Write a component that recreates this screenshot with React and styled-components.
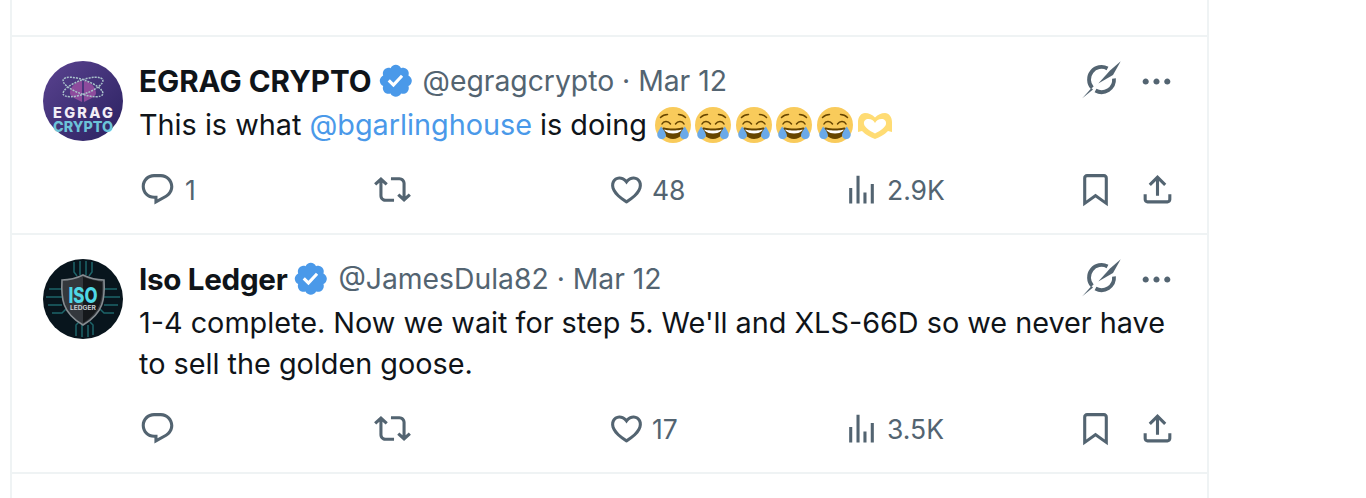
import React from 'react';
import styled, { createGlobalStyle } from 'styled-components';

const GlobalStyle = createGlobalStyle`
  html, body {
    margin: 0;
    padding: 0;
    height: 498px;
    overflow: hidden;
    background: #fff;
    font-family: Inter, "Liberation Sans", sans-serif;
    color: #0f1419;
  }
`;

const ICONS = {
  reply: 'M1.751 10c0-4.42 3.584-8 8.005-8h4.366c4.49 0 8.129 3.64 8.129 8.13 0 2.96-1.607 5.68-4.196 7.11l-8.054 4.46v-3.69h-.067c-4.49.1-8.183-3.51-8.183-8.01zm8.005-6c-3.317 0-6.005 2.69-6.005 6 0 3.37 2.77 6.08 6.138 6.01l.351-.01h1.761v2.3l5.087-2.81c1.951-1.08 3.163-3.13 3.163-5.36 0-3.39-2.744-6.13-6.129-6.13H9.756z',
  retweet: 'M4.5 3.88l4.432 4.14-1.364 1.46L5.5 7.55V16c0 1.1.896 2 2 2H13v2H7.5c-2.209 0-4-1.79-4-4V7.55L1.432 9.48.068 8.02 4.5 3.88zM16.5 6H11V4h5.5c2.209 0 4 1.79 4 4v8.45l2.068-1.93 1.364 1.46-4.432 4.14-4.432-4.14 1.364-1.46 2.068 1.93V8c0-1.1-.896-2-2-2z',
  like: 'M16.697 5.5c-1.222-.06-2.679.51-3.89 2.16l-.805 1.09-.806-1.09C9.984 6.01 8.526 5.44 7.304 5.5c-1.243.07-2.349.78-2.91 1.91-.552 1.12-.633 2.78.479 4.82 1.074 1.97 3.257 4.27 7.129 6.61 3.87-2.34 6.052-4.64 7.126-6.61 1.111-2.04 1.03-3.7.477-4.82-.561-1.13-1.666-1.84-2.908-1.91zm4.187 7.69c-1.351 2.48-4.001 5.12-8.379 7.67l-.503.3-.504-.3c-4.379-2.55-7.029-5.19-8.382-7.67-1.36-2.5-1.41-4.86-.514-6.67.887-1.79 2.647-2.91 4.601-3.01 1.651-.09 3.368.56 4.798 2.01 1.429-1.45 3.146-2.1 4.796-2.01 1.954.1 3.714 1.22 4.601 3.01.896 1.81.846 4.17-.514 6.67z',
  views: 'M8.75 21V3h2v18h-2zM18 21V8.5h2V21h-2zM4 21l.004-10h2L6 21H4zm9.248 0v-7h2v7h-2z',
  bookmark: 'M4 4.5C4 3.12 5.119 2 6.5 2h11C18.881 2 20 3.12 20 4.5v18.44l-8-5.71-8 5.71V4.5zM6.5 4c-.276 0-.5.22-.5.5v14.56l6-4.29 6 4.29V4.5c0-.28-.224-.5-.5-.5h-11z',
  share: 'M12 2.59l5.7 5.7-1.41 1.42L13 6.41V16h-2V6.41l-3.3 3.3-1.41-1.42L12 2.59zM21 15l-.02 3.51c0 1.38-1.12 2.49-2.5 2.49H5.5C4.11 21 3 19.88 3 18.5V15h2v3.5c0 .28.22.5.5.5h12.98c.28 0 .5-.22.5-.5L19 15h2z',
  more: 'M3 12c0-1.1.9-2 2-2s2 .9 2 2-.9 2-2 2-2-.9-2-2zm9 2c1.1 0 2-.9 2-2s-.9-2-2-2-2 .9-2 2 .9 2 2 2zm7 0c1.1 0 2-.9 2-2s-.9-2-2-2-2 .9-2 2 .9 2 2 2z',
  badge: 'M20.396 11c-.018-.646-.215-1.275-.57-1.816-.354-.54-.852-.972-1.438-1.246.223-.607.27-1.264.14-1.897-.131-.634-.437-1.218-.882-1.687-.47-.445-1.053-.75-1.687-.882-.633-.13-1.29-.083-1.897.14-.273-.587-.704-1.086-1.245-1.44S11.647 1.62 11 1.604c-.646.017-1.273.213-1.813.568s-.969.854-1.24 1.44c-.608-.223-1.267-.272-1.902-.14-.635.13-1.22.436-1.69.882-.445.47-.749 1.055-.878 1.688-.13.633-.08 1.29.144 1.896-.587.274-1.087.705-1.443 1.245-.356.54-.555 1.17-.574 1.817.02.647.218 1.276.574 1.817.356.54.856.972 1.443 1.245-.224.606-.274 1.263-.144 1.896.13.634.433 1.218.877 1.688.47.443 1.054.747 1.687.878.633.132 1.29.084 1.897-.136.274.586.705 1.084 1.246 1.439.54.354 1.17.551 1.816.569.647-.016 1.276-.213 1.817-.567s.972-.854 1.245-1.44c.604.239 1.266.296 1.903.164.636-.132 1.22-.447 1.68-.907.46-.46.776-1.044.908-1.681s.075-1.299-.165-1.903c.586-.274 1.084-.705 1.439-1.246.354-.54.551-1.17.569-1.816zM9.662 14.85l-3.429-3.428 1.293-1.302 2.072 2.072 4.4-4.794 1.347 1.246z',
};

const Icon = ({ name, className }) => (
  <svg className={className} viewBox="0 0 24 24" fill="currentColor" aria-hidden="true">
    <path d={ICONS[name]} />
  </svg>
);

const ActionIcon = styled(Icon)`
  width: 37px;
  height: 37px;
  flex: none;
  color: #536471;
`;

const Badge = styled(Icon)`
  width: 41px;
  height: 41px;
  flex: none;
  color: #4a99e9;
  margin: 3px 5px 0 5px;
`;

const GrokMark = styled.svg`
  width: 40px;
  height: 40px;
  flex: none;
  color: #536471;
`;

const Grok = () => (
  <GrokMark viewBox="0 0 40 40" aria-hidden="true">
    <path d="M25.500 7.500A12.500 12.500 0 0 0 10.200 26.800M32 17.500A12.500 12.500 0 0 1 13.500 29.500" fill="none" stroke="currentColor" strokeWidth="3.800" />
    <path d="M38.700 .3 31 14 16.300 22.500 28 9.500Z" fill="currentColor" stroke="#fff" strokeWidth="1" paintOrder="stroke" />
    <path d="M.3 37.300 9.500 27 11 28.500Z" fill="currentColor" />
  </GrokMark>
);

const EmojiSvg = styled.svg`
  width: 36px;
  height: 36px;
  flex: none;
  margin-right: 4.400px;
`;

const LaughEmoji = () => (
  <EmojiSvg viewBox="0 0 36 36" aria-hidden="true">
    <circle cx="18" cy="18" r="18" fill="#f9cb5b" />
    <path fill="#664500" d="M18 21.500c-3.600 0-6-.4-9-1-.7-.1-2 0-2 2 0 4 4.600 9.500 11 9.500s11-5.500 11-9.500c0-2-1.300-2.100-2-2-3 .6-5.400 1-9 1z" />
    <path fill="#fff" d="M9 22.500s3 1 9 1 9-1 9-1-2 4-9 4-9-4-9-4z" />
    <path fill="none" stroke="#664500" strokeWidth="1.500" strokeLinecap="round" d="M7 17c1.500-3 6-3.500 8.500 0M20.500 17c2.500-3.500 7-3 8.500 0M5.500 10.500c2-2 4.500-3 7-3M30.500 10.500c-2-2-4.500-3-7-3" />
    <path fill="#6aa9e8" d="M11 28.500c-.4 2.400-2.700 4-5.100 3.600-2.400-.4-4-2.600-3.600-5 .3-2.400 3.900-7.600 3.900-7.600s5.100 6.600 4.800 9zM25 28.500c.4 2.400 2.700 4 5.100 3.600 2.400-.4 4-2.600 3.600-5-.3-2.400-3.900-7.600-3.900-7.600s-5.100 6.600-4.800 9z" />
  </EmojiSvg>
);

const HeartHands = () => (
  <EmojiSvg viewBox="0 0 36 36" aria-hidden="true">
    <path fill="#ffdc74" fillRule="evenodd" d="M1 15c0-5 3-9 7-9 4 0 7 1.500 10 4.500C21 7.500 24 6 28 6c4 0 7 4 7 9v10l-4-1c-4 4-8 6-13 8-5-2-9-4-13-8l-4 1V15zM11.500 12c-3 0-5 2-4.500 5 .5 3 5 6.500 11 9.500 6-3 10.500-6.500 11-9.500.5-3-1.500-5-4.500-5-3 0-5 1.500-6.500 4-1.500-2.500-3.500-4-6.500-4z" />
  </EmojiSvg>
);

const EgragAvatar = () => (
  <AvatarSvg viewBox="0 0 80 80" aria-hidden="true">
    <defs>
      <linearGradient id="egragBg" x1="0" y1="0" x2="1" y2="1">
        <stop offset="0" stopColor="#5a4390" />
        <stop offset="1" stopColor="#2a2160" />
      </linearGradient>
    </defs>
    <circle cx="40" cy="40" r="40" fill="url(#egragBg)" />
    <path d="M39 20c-7 0-12 7-12 12 0 4 7 6 12 9zM41 20c7 0 12 7 12 12 0 4-7 6-12 9z" fill="#8d4b9c" />
    <ellipse cx="40" cy="26" rx="21" ry="7" transform="rotate(20 40 26)" fill="none" stroke="#a9c2cb" strokeWidth="1.500" strokeDasharray="2 1" />
    <ellipse cx="40" cy="26" rx="21" ry="7" transform="rotate(-20 40 26)" fill="none" stroke="#a9c2cb" strokeWidth="1.500" strokeDasharray="2 1" />
    <text x="40" y="57" textAnchor="middle" textLength="60" lengthAdjust="spacing" fontFamily="Inter, sans-serif" fontWeight="800" fontSize="14.500" fill="#f3eef6">EGRAG</text>
    <text x="40" y="71" textAnchor="middle" textLength="60" lengthAdjust="spacingAndGlyphs" fontFamily="Inter, sans-serif" fontWeight="800" fontSize="15" fill="#6cc3d8">CRYPTO</text>
  </AvatarSvg>
);

const IsoAvatar = () => (
  <AvatarSvg viewBox="0 0 80 80" aria-hidden="true">
    <circle cx="40" cy="40" r="40" fill="#08151d" />
    <path d="M6 30h12l4 4M3 38h16M5 46h14M9 54h10l4-4M74 30H62l-4 4M77 38H61M75 46H61M71 54H61l-4-4M31 3v10l3 4M37 2v14M43 2v14M49 3v10l-3 4M33 77V66l3-3M39 78V66M45 78V66M50 76V66l-3-3" fill="none" stroke="#1d6469" strokeWidth="1.500" />
    <path d="M40 16c6 3 15 5 21 5 1 18 0 33-21 45-21-12-22-27-21-45 6 0 15-2 21-5z" fill="#34383d" stroke="#878d92" strokeWidth="1.600" />
    <path d="M40 18v46c18-11 20-25 19-41-6-1-13-3-19-5z" fill="#15181b" />
    <text x="40" y="44" textAnchor="middle" textLength="29" lengthAdjust="spacingAndGlyphs" fontFamily="Inter, sans-serif" fontWeight="800" fontSize="21" fill="#4fd8e6">ISO</text>
    <text x="40" y="51" textAnchor="middle" textLength="26" lengthAdjust="spacingAndGlyphs" fontFamily="Inter, sans-serif" fontWeight="700" fontSize="6" fill="#c8ced2">LEDGER</text>
  </AvatarSvg>
);

const Column = styled.div`
  box-sizing: border-box;
  width: 1199px;
  min-height: 498px;
  margin-left: 10px;
  padding-top: 35px;
  border-left: 2px solid #eff3f4;
  border-right: 2px solid #eff3f4;
`;

const Tweet = styled.article`
  display: grid;
  grid-template-columns: 80px 1fr;
  column-gap: 16px;
  padding: 24px 0 25px 31px;
  border-top: 2px solid #eff3f4;
`;

const AvatarSvg = styled.svg`
  width: 80px;
  height: 80px;
  display: block;
`;

const PlainAvatar = styled.div`
  width: 80px;
  height: 80px;
  border-radius: 50%;
  background: #6d6a86;
`;

const Body = styled.div`
  min-width: 0;
`;

const Header = styled.div`
  display: flex;
  align-items: center;
  height: 40px;
  font-size: 28.300px;
`;

const Name = styled.span`
  font-size: 29.600px;
  font-weight: 700;
  letter-spacing: ${({ $tracking }) => $tracking}px;
`;

const Muted = styled.span`
  color: #536471;
`;

const HeaderTools = styled.div`
  margin-left: auto;
  display: flex;
  align-items: center;
  gap: 16px;
  margin-right: 32px;
`;

const Text = styled.div`
  font-size: 28.800px;
  line-height: 41px;
  margin-top: 3px;
  width: 1040px;
`;

const EmojiRun = styled.span`
  display: inline-flex;
  vertical-align: -8px;
`;

const Mention = styled.span`
  color: #4a99e9;
`;

const Actions = styled.div`
  display: grid;
  grid-template-columns: 235px 234px 235px 234px 62px 37px;
  margin-top: 26px;
  height: 37px;
`;

const Action = styled.div`
  display: flex;
  align-items: center;
  gap: ${({ $gap }) => $gap || 0}px;
  color: #536471;
  font-size: 26.500px;
`;

const TweetCard = ({ avatar, name, tracking, handle, date, children, counts }) => (
  <Tweet>
    {avatar}
    <Body>
      <Header>
        <Name $tracking={tracking}>{name}</Name>
        <Badge name="badge" />
        <Muted>{handle} · {date}</Muted>
        <HeaderTools>
          <Grok />
          <ActionIcon name="more" />
        </HeaderTools>
      </Header>
      <Text>{children}</Text>
      <Actions>
        <Action $gap={9}><ActionIcon name="reply" />{counts.reply}</Action>
        <Action><ActionIcon name="retweet" /></Action>
        <Action $gap={7}><ActionIcon name="like" />{counts.like}</Action>
        <Action $gap={7}><ActionIcon name="views" />{counts.views}</Action>
        <Action><ActionIcon name="bookmark" /></Action>
        <Action><ActionIcon name="share" /></Action>
      </Actions>
    </Body>
  </Tweet>
);

const App = () => (
  <>
    <GlobalStyle />
    <Column>
      <TweetCard
        avatar={<EgragAvatar />}
        name="EGRAG CRYPTO"
        tracking={0}
        handle="@egragcrypto"
        date="Mar 12"
        counts={{ reply: '1', like: '48', views: '2.9K' }}
      >
        This is what <Mention>@bgarlinghouse</Mention> is doing{' '}
        <EmojiRun>
          <LaughEmoji />
          <LaughEmoji />
          <LaughEmoji />
          <LaughEmoji />
          <LaughEmoji />
          <HeartHands />
        </EmojiRun>
      </TweetCard>
      <TweetCard
        avatar={<IsoAvatar />}
        name="Iso Ledger"
        tracking={-0.3}
        handle="@JamesDula82"
        date="Mar 12"
        counts={{ reply: '', like: '17', views: '3.5K' }}
      >
        1-4 complete. Now we wait for step 5. We'll and XLS-66D so we never have to sell the golden goose.
      </TweetCard>
      <Tweet>
        <PlainAvatar />
      </Tweet>
    </Column>
  </>
);

export default App;
